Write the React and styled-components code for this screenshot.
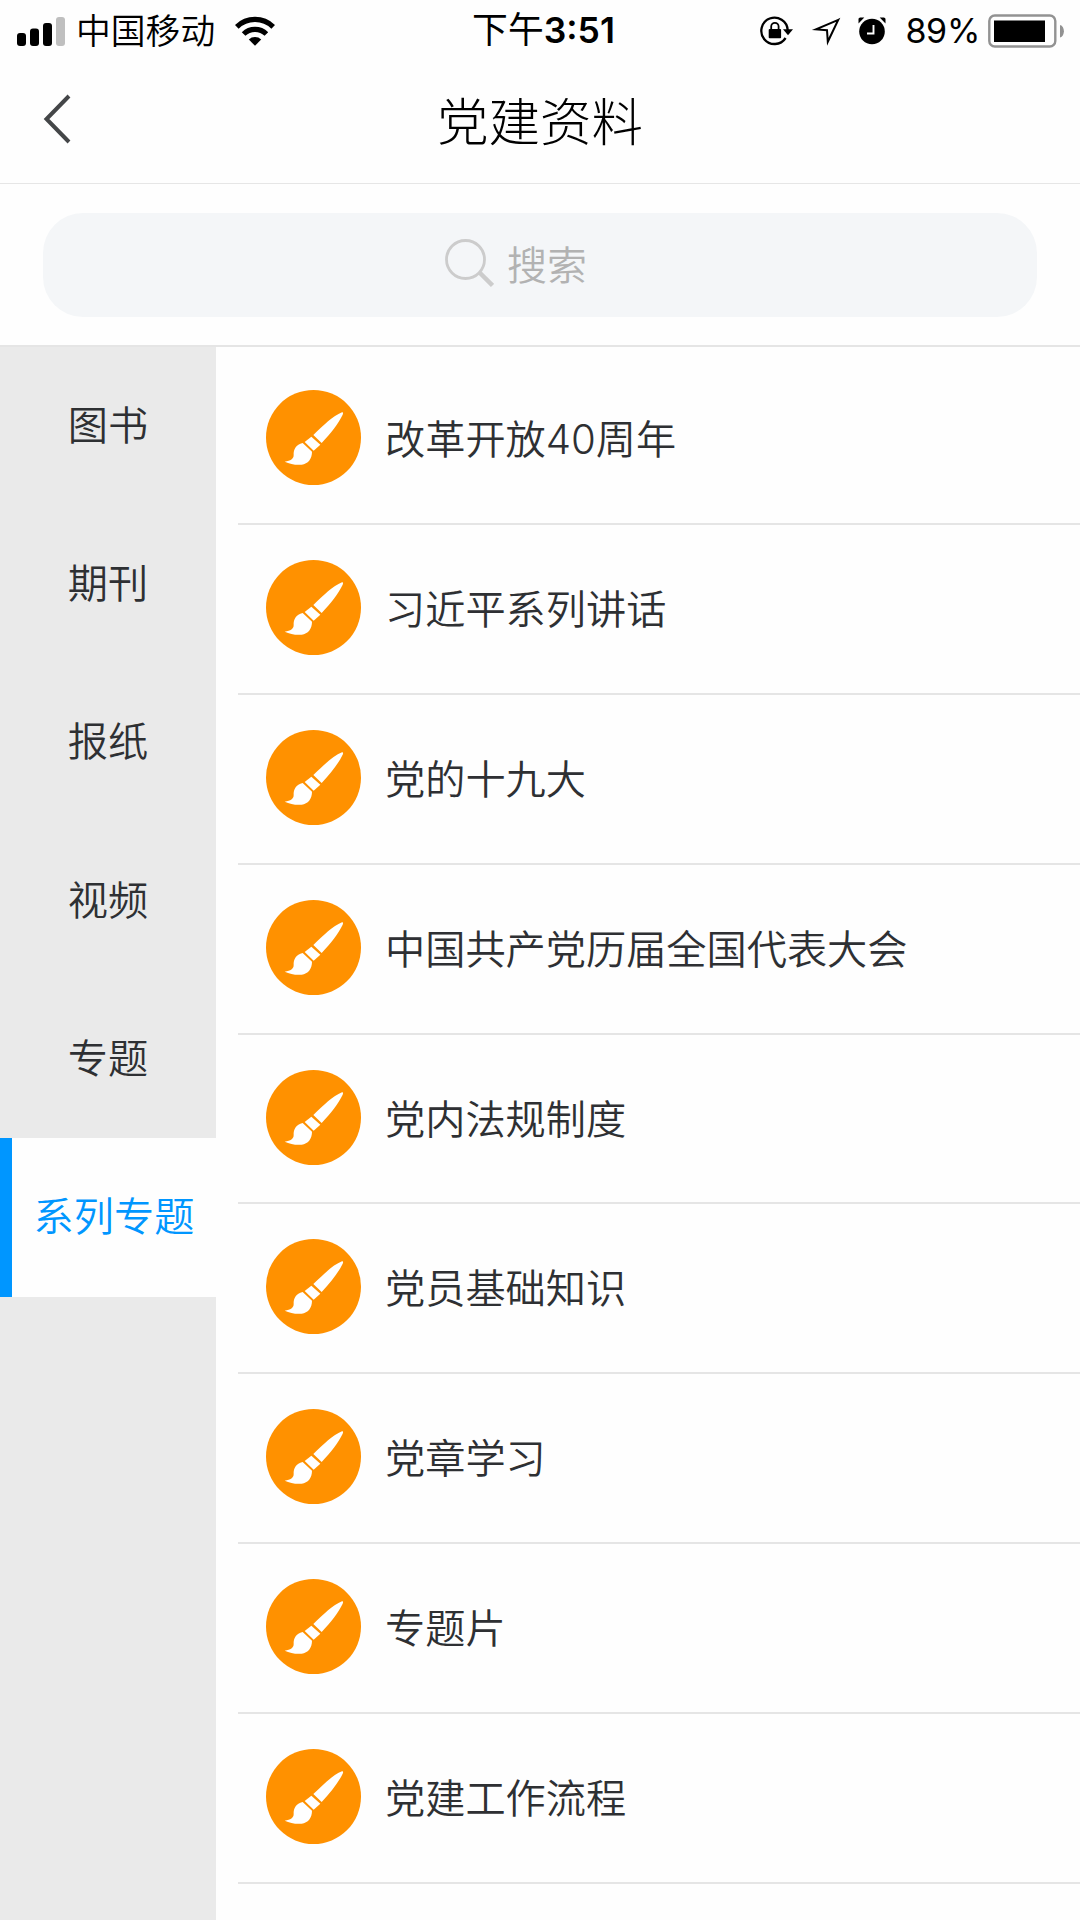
import React from 'react';
import styled, { createGlobalStyle } from 'styled-components';

const GlobalStyle = createGlobalStyle`
  * {
    box-sizing: border-box;
  }

  body {
    margin: 0;
    background: #fefefe;
    color: #2e3033;
    font-family: Inter, "Noto Sans CJK SC", sans-serif;
    font-weight: 350;
  }
`;

const Page = styled.div`
  display: flex;
  flex-direction: column;
  width: 1080px;
  height: 1920px;
  overflow: hidden;
`;

const StatusBar = styled.div`
  display: grid;
  grid-template-columns: 1fr auto 1fr;
  align-items: center;
  height: 58px;
  padding: 0 15px 0 17px;
  color: #000;
  font-size: 35px;
  line-height: 60px;
`;

const StatusGroup = styled.div`
  display: flex;
  align-items: center;
  justify-content: ${props => (props.$end ? 'flex-end' : 'flex-start')};

  svg {
    display: block;
    flex: none;
  }
`;

const Carrier = styled.span`
  margin: 0 20px 0 11px;
  font-size: 34.8px;
  font-weight: 350;
`;

const Clock = styled.div`
  padding-left: 5px;
  font-size: 35.8px;
  font-weight: 400;

  b {
    font-size: 35.5px;
    font-weight: 600;
  }
`;

const Percent = styled.span`
  margin: 0 8px 0 19px;
  font-size: 34px;
  font-weight: 400;
  letter-spacing: -0.3px;
`;

const StatusIcons = styled.div`
  display: flex;
  align-items: center;
  gap: 17px;
`;

const NavBar = styled.header`
  display: grid;
  grid-template-columns: 120px 1fr 120px;
  align-items: center;
  height: 126px;
  border-bottom: 1px solid #e6e6e6;
`;

const BackButton = styled.button`
  display: flex;
  align-items: center;
  height: 100%;
  padding: 0 0 3px 43px;
  border: 0;
  background: none;
`;

const Title = styled.h1`
  margin: 0;
  padding-bottom: 5px;
  color: #000;
  font-size: 51.5px;
  font-weight: 300;
  text-align: center;
`;

const SearchSection = styled.div`
  height: 163px;
  padding: 29px 43px 0;
  border-bottom: 2px solid #e5e5e5;
`;

const SearchBox = styled.div`
  display: flex;
  align-items: center;
  justify-content: center;
  gap: 13px;
  height: 104px;
  padding: 0 48px 4px 0;
  border-radius: 40px;
  background: #f4f6f8;
  color: #b2b2b2;
  font-size: 40px;
`;

const Content = styled.div`
  display: flex;
  flex: 1;
  min-height: 0;
`;

const Sidebar = styled.nav`
  flex: none;
  width: 216px;
  background: #eaeaea;
`;

const Category = styled.div`
  display: flex;
  align-items: center;
  justify-content: center;
  height: 158.3px;
  padding-bottom: 8px;
  border-left: ${props => (props.$active ? '12px solid #0096ff' : '0')};
  background: ${props => (props.$active ? '#fefefe' : 'transparent')};
  color: ${props => (props.$active ? '#0096ff' : '#2e3033')};
  font-size: 40.2px;
`;

const TopicList = styled.main`
  flex: 1;
  padding: 8px 0 0 22px;
`;

const Topic = styled.div`
  display: flex;
  align-items: center;
  gap: 24px;
  height: 169.9px;
  padding: 0 0 3px 28px;
  border-bottom: 2px solid #e5e5e5;
  font-size: 40.2px;
`;

const TopicName = styled.span`
  padding-bottom: 2px;
`;

const TopicIcon = styled.svg`
  display: block;
  flex: none;
  width: 95px;
  height: 95px;
`;

const categories = ['图书', '期刊', '报纸', '视频', '专题', '系列专题'];

const topics = [
  '改革开放40周年',
  '习近平系列讲话',
  '党的十九大',
  '中国共产党历届全国代表大会',
  '党内法规制度',
  '党员基础知识',
  '党章学习',
  '专题片',
  '党建工作流程',
];

const SignalIcon = () => (
  <svg width="48" height="30" viewBox="0 0 48 30">
    <rect x="0" y="17" width="9" height="13" rx="3" />
    <rect x="13" y="12.5" width="9" height="17.5" rx="3" />
    <rect x="26" y="7" width="9" height="23" rx="3" />
    <rect x="39" y="1" width="9" height="29" rx="3" fill="#bfbfbf" />
  </svg>
);

const WifiIcon = () => (
  <svg width="40" height="30" viewBox="0 0 40 30">
    <path d="M1.8 10.8a26 26 0 0 1 36.4 0M8.6 18a16.3 16.3 0 0 1 22.8 0" fill="none" stroke="#000" strokeWidth="5.2" />
    <path d="M13.8 23.6a9 9 0 0 1 12.4 0L20 29.8z" />
  </svg>
);

const RotationLockIcon = () => (
  <svg width="34" height="30" viewBox="0 0 34 30">
    <path d="M27.7 14A13.2 13.2 0 1 0 25.6 22" fill="none" stroke="#000" strokeWidth="2.3" />
    <path d="M23 13.2h10l-5 6z" />
    <rect x="8.7" y="13" width="12.4" height="9.3" rx="1" />
    <path d="M11.2 14v-3.5a3.7 3.7 0 0 1 7.4 0V14" fill="none" stroke="#000" strokeWidth="1.8" />
  </svg>
);

const LocationIcon = () => (
  <svg width="30" height="30" viewBox="0 0 30 30">
    <path d="M27.3 3.8 5 13.4l11 .8.8 11.6z" fill="none" stroke="#000" strokeWidth="2" strokeMiterlimit="8" />
  </svg>
);

const AlarmIcon = () => (
  <svg width="28" height="28" viewBox="0 0 28 28">
    <circle cx="14" cy="14.5" r="12.8" />
    <path d="M.5 6.5V2.3C.5 1.2 1.3.5 2.3.5h4zM27.5 6.5V2.3c0-1.1-.8-1.8-1.8-1.8h-4z" />
    <path d="M15.5 8v8.5H9" fill="none" stroke="#fff" strokeWidth="1.9" />
  </svg>
);

const BatteryIcon = () => (
  <svg width="77" height="34" viewBox="0 0 77 34">
    <rect x="1.3" y="1.5" width="66" height="31" rx="5.5" fill="none" stroke="#929292" strokeWidth="2.4" />
    <rect x="6" y="6.5" width="51" height="21.5" />
    <path d="M72 11c5.2 1.2 5.2 11.3 0 12.5z" fill="#929292" />
  </svg>
);

const BackIcon = () => (
  <svg width="30" height="52" viewBox="0 0 30 52">
    <path d="M26 3 3.5 26 26 49" fill="none" stroke="#444648" strokeWidth="4" />
  </svg>
);

const SearchIcon = () => (
  <svg width="49" height="49" viewBox="0 0 49 49">
    <circle cx="20.5" cy="20.5" r="19" fill="none" stroke="#ccc" strokeWidth="2.8" />
    <path d="m35 34 12.5 12.5" stroke="#ccc" strokeWidth="4.5" />
  </svg>
);

const BrushIcon = () => (
  <TopicIcon viewBox="0 0 285 285">
    <circle cx="142.5" cy="142.5" r="142.5" fill="#ff9100" />
    <g fill="#fff">
      <path d="M228 67c4-1 4 3 2 7-14 29-35 54-63 85l-25-24c31-29 58-57 86-68z" />
      <path d="m116 156 20-16 27 24-20 18z" />
      <path d="m110 159 28 26c0 22-12 36-31 39-17 2-35-2-51-9 18-3 27-8 27-20-1-16 7-31 27-36z" />
    </g>
  </TopicIcon>
);

const App = () => (
  <Page>
    <GlobalStyle />
    <StatusBar>
      <StatusGroup>
        <SignalIcon />
        <Carrier>中国移动</Carrier>
        <WifiIcon />
      </StatusGroup>
      <Clock>
        下午<b>3:51</b>
      </Clock>
      <StatusGroup $end>
        <StatusIcons>
          <RotationLockIcon />
          <LocationIcon />
          <AlarmIcon />
        </StatusIcons>
        <Percent>89%</Percent>
        <BatteryIcon />
      </StatusGroup>
    </StatusBar>
    <NavBar>
      <BackButton aria-label="返回">
        <BackIcon />
      </BackButton>
      <Title>党建资料</Title>
    </NavBar>
    <SearchSection>
      <SearchBox>
        <SearchIcon />
        <span>搜索</span>
      </SearchBox>
    </SearchSection>
    <Content>
      <Sidebar>
        {categories.map(name => (
          <Category key={name} $active={name === '系列专题'}>{name}</Category>
        ))}
      </Sidebar>
      <TopicList>
        {topics.map(name => (
          <Topic key={name}>
            <BrushIcon />
            <TopicName>{name}</TopicName>
          </Topic>
        ))}
      </TopicList>
    </Content>
  </Page>
);

export default App;
